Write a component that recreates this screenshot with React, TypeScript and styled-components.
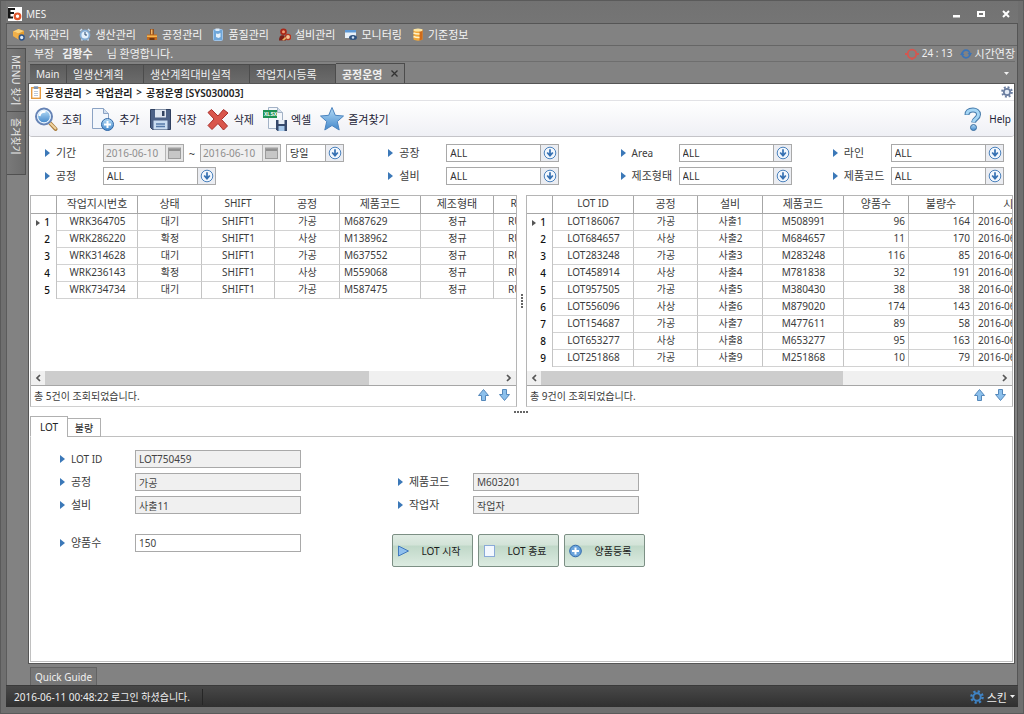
import React from "react";
import styled, { createGlobalStyle, css } from "styled-components";

const GlobalStyle = createGlobalStyle`
  *, *::before, *::after { box-sizing: border-box; }
  body { margin: 0; background: #6e6e6e; }
  body, button, input, select {
    font-family: "Noto Sans", "Noto Sans CJK KR", sans-serif;
    font-size: 11px;
    color: #3c3c3c;
  }
  button { cursor: pointer; }
`;

/* ---------- window frame ---------- */

const Shell = styled.div`
  min-height: 100vh;
  display: flex;
  flex-direction: column;
  padding: 0 5px 6px;
  background: #6f6f6f;
  border: 1px solid #5a5a5a;
`;

const TitleBar = styled.header`
  display: flex;
  align-items: center;
  gap: 4px;
  height: 22px;
  padding: 4px 2px 0;
  background: linear-gradient(#727272, #757575);
  color: #f2f2f2;
  font-size: 10px;
`;

const WindowButtons = styled.div`
  display: flex;
  gap: 9px;
  margin-left: auto;
  padding-right: 2px;
`;

const WindowButton = styled.button`
  display: grid;
  place-items: center;
  width: 16px;
  height: 14px;
  padding: 0;
  border: 0;
  background: none;
`;

const Frame = styled.div`
  flex: 1;
  display: flex;
  flex-direction: column;
  background: #828282;
  border: 1px solid #555;
  border-bottom: 0;
  border-left-color: #5c5c5c;
`;

const MenuBar = styled.nav`
  display: flex;
  align-items: center;
  gap: 10px;
  height: 22px;
  padding: 0 6px;
  border-bottom: 1px solid #666;
`;

const MenuItem = styled.button`
  display: flex;
  align-items: center;
  gap: 4px;
  padding: 0;
  border: 0;
  background: none;
  color: #f4f4f4;
  line-height: 16px;
  white-space: nowrap;
`;

const Workspace = styled.div`
  flex: 1;
  display: flex;
`;

const SideRail = styled.aside`
  flex: none;
  width: 21px;
  padding-top: 2px;
`;

const SideTab = styled.button`
  display: flex;
  align-items: center;
  width: 19px;
  height: 64px;
  padding: 6px 0;
  border: 1px solid #505050;
  border-left: 0;
  margin-bottom: -1px;
  background: linear-gradient(90deg, #7a7a7a, #6c6c6c);
  color: #e8e8e8;
  writing-mode: vertical-rl;
  text-orientation: sideways;
  white-space: nowrap;
  font-size: 10px;
  line-height: 18px;
`;

const Main = styled.main`
  flex: 1;
  min-width: 0;
  display: flex;
  flex-direction: column;
  padding-right: 2px;
`;

const UserBar = styled.div`
  display: flex;
  align-items: center;
  height: 16px;
  padding: 0 0 0 6px;
  border-bottom: 1px solid #6e6e6e;
  color: #f0f0f0;
  line-height: 15px;
  white-space: nowrap;
  strong { margin: 0 14px 0 8px; }
`;

const Session = styled.div`
  display: flex;
  align-items: center;
  gap: 3px;
  margin-left: auto;
  font-size: 10px;
`;

const ExtendButton = styled.button`
  display: flex;
  align-items: center;
  gap: 3px;
  margin-left: 4px;
  padding: 0;
  border: 0;
  background: none;
  color: #f0f0f0;
  line-height: 15px;
`;

const TabStrip = styled.div`
  display: flex;
  align-items: flex-end;
  height: 21px;
  padding: 0 3px 0 2px;
`;

const DocTab = styled.button<{ $width: number; $active?: boolean; $latin?: boolean }>`
  display: flex;
  align-items: center;
  justify-content: space-between;
  width: ${(p) => p.$width}px;
  height: ${(p) => (p.$active ? 20 : 19)}px;
  padding: 0 6px;
  border: 1px solid #4c4c4c;
  border-width: 1px 1px 0 0;
  background: linear-gradient(#5c5c5c, #6b6b6b);
  color: #f0f0f0;
  font-size: ${(p) => (p.$latin ? 10 : 11)}px;
  white-space: nowrap;
  ${(p) =>
    p.$active &&
    css`
      background: #828282;
      font-weight: 700;
    `}
`;

const TabMenu = styled.button`
  display: grid;
  place-items: center;
  width: 12px;
  height: 20px;
  margin-left: auto;
  padding: 0;
  border: 0;
  background: none;
`;

const Page = styled.div`
  flex: 1;
  display: flex;
  flex-direction: column;
  border: 1px solid #555;
  background: #fff;
`;

/* ---------- page header ---------- */

const Breadcrumb = styled.div`
  display: flex;
  align-items: center;
  gap: 4px;
  height: 17px;
  padding: 0 1px 0 2px;
  border-bottom: 1px solid #e2e2e6;
  color: #222;
  font-size: 10px;
  font-weight: 600;
  white-space: nowrap;
  svg:last-child { margin-left: auto; }
`;

const Toolbar = styled.div`
  display: flex;
  align-items: center;
  gap: 9px;
  height: 36px;
  padding: 0 3px 0 5px;
  border-bottom: 1px solid #c4c4c8;
  border-radius: 0 0 3px 3px;
  background: linear-gradient(#fff, #eff0f5);
`;

const Tool = styled.button<{ $end?: boolean }>`
  display: flex;
  align-items: center;
  gap: 4px;
  padding: 0;
  border: 0;
  background: none;
  color: #222236;
  white-space: nowrap;
  ${(p) => p.$end && "margin-left: auto; font-size: 10px;"}
`;

/* ---------- filters ---------- */

const Filters = styled.form`
  display: grid;
  grid-template-columns: 343fr 232fr 212fr 181fr;
  row-gap: 5px;
  padding: 7px 0 10px 16px;
`;

const Field = styled.div`
  display: flex;
  align-items: center;
  min-width: 0;
`;

const Label = styled.label<{ $width: number; $latin?: boolean }>`
  display: flex;
  align-items: center;
  gap: 6px;
  flex: none;
  width: ${(p) => p.$width}px;
  font-size: ${(p) => (p.$latin ? 10 : 11)}px;
  line-height: 16px;
  white-space: nowrap;
`;

const controlBox = css`
  height: 18px;
  border: 1px solid #a9a9a9;
  border-radius: 0;
  background: #fff;
  font-size: 10px;
`;

const SelectBox = styled.span<{ $width: number }>`
  position: relative;
  display: flex;
  width: ${(p) => p.$width}px;
  svg { position: absolute; right: 1px; top: 1px; pointer-events: none; }
`;

const SelectInput = styled.select`
  ${controlBox}
  width: 100%;
  padding: 0 18px 0 3px;
  appearance: none;
  background: linear-gradient(90deg, #a9a9a9 1px, #ebedf2 1px) right / 18px 100% no-repeat #fff;
  color: #333;
`;

const DateBox = styled.span`
  position: relative;
  display: flex;
  width: 81px;
  svg { position: absolute; right: 3px; top: 3px; pointer-events: none; }
`;

const DateInput = styled.input`
  ${controlBox}
  width: 100%;
  padding: 0 18px 0 2px;
  background: linear-gradient(90deg, #b5b5b5 1px, #e6e6e6 1px) right / 18px 100% no-repeat #f0f0f0;
  color: #8e8e8e;
`;

const Tilde = styled.span`
  width: 16px;
  text-align: center;
`;

const Period = styled.div`
  margin-left: 5px;
`;

/* ---------- data grids ---------- */

const Grids = styled.div`
  display: grid;
  grid-template-columns: minmax(0, 1fr) 9px minmax(0, 1fr);
  padding: 0 1px;
`;

const GridPanel = styled.section`
  display: flex;
  flex-direction: column;
  border: 1px solid #b5b5b5;
  border-bottom-color: #d0d0d0;
`;

const TableClip = styled.div`
  flex: 1;
  overflow: hidden;
  padding-bottom: 4px;
`;

const Table = styled.table`
  table-layout: fixed;
  width: 0;
  border-collapse: separate;
  border-spacing: 0;
`;

const HeadCell = styled.th<{ $latin?: boolean }>`
  height: 18px;
  padding: 0 0 2px;
  border-right: 1px solid #a6a6a6;
  border-bottom: 1px solid #a6a6a6;
  font-size: ${(p) => (p.$latin ? 10 : 11)}px;
  font-weight: 400;
  line-height: 15px;
  white-space: nowrap;
`;

const Cell = styled.td<{ $align: string }>`
  height: 17px;
  padding: 0 3px 2px 4px;
  border-right: 1px solid #c4c4c4;
  border-bottom: 1px solid #d2d2d2;
  font-size: 10px;
  line-height: 14px;
  text-align: ${(p) => p.$align};
  white-space: nowrap;
`;

const RowHead = styled.th`
  height: 17px;
  padding: 0 6px 1px 0;
  border-right: 1px solid #c4c4c4;
  font-size: 10px;
  font-weight: 500;
  line-height: 14px;
  text-align: right;
  color: #111;
  svg { margin-right: 4px; }
`;

const ScrollBar = styled.div`
  display: flex;
  height: 15px;
  border-bottom: 1px solid #a6a6a6;
  background: #f0f0f0;
`;

const ScrollButton = styled.button`
  display: grid;
  place-items: center;
  width: 14px;
  padding: 0;
  border: 0;
  background: none;
`;

const Track = styled.div`
  flex: 1;
`;

const Thumb = styled.div<{ $size: number }>`
  width: ${(p) => p.$size}%;
  height: 14px;
  background: #cdcdcd;
`;

const GridFooter = styled.div`
  display: flex;
  align-items: center;
  gap: 10px;
  height: 20px;
  padding: 0 6px 2px 3px;
  font-size: 10px;
  span { margin-right: auto; }
`;

const ArrowButton = styled.button`
  display: grid;
  padding: 0;
  border: 0;
  background: none;
`;

const Splitter = styled.div<{ $vertical?: boolean }>`
  display: flex;
  align-items: center;
  justify-content: center;
  ${(p) => (p.$vertical ? "" : "height: 9px;")}
`;

/* ---------- detail area ---------- */

const DetailTabs = styled.div`
  display: flex;
  align-items: flex-end;
  height: 21px;
  padding-left: 1px;
  margin-bottom: -1px;
`;

const DetailTab = styled.button<{ $active?: boolean }>`
  position: relative;
  height: ${(p) => (p.$active ? 21 : 19)}px;
  width: ${(p) => (p.$active ? 38 : 34)}px;
  margin-right: ${(p) => (p.$active ? -1 : 0)}px;
  padding: 0;
  border: 1px solid #b0b0b0;
  border-bottom-color: ${(p) => (p.$active ? "#fff" : "#b0b0b0")};
  background: #fff;
  color: #222;
  font-size: 10px;
`;

const DetailPanel = styled.section`
  flex: 1;
  display: flex;
  flex-direction: column;
  gap: 20px;
  margin: 0 1px 1px;
  padding: 13px 29px 30px;
  border: 1px solid #c0c0c0;
`;

const DetailGrid = styled.div`
  display: grid;
  grid-template-columns: 338px minmax(0, 1fr);
  row-gap: 5px;
`;

const DetailRow = styled.div`
  display: flex;
  align-items: flex-start;
  gap: 91px;
`;

const TextInput = styled.input`
  ${controlBox}
  width: 166px;
  padding: 0 3px;
  color: #444;
  &:read-only { background: #f0f0f0; }
`;

const Actions = styled.div`
  display: flex;
  gap: 5px;
`;

const ActionButton = styled.button`
  display: flex;
  align-items: center;
  width: 81px;
  height: 33px;
  padding: 0 4px;
  border: 1px solid #7c8f84;
  border-radius: 2px;
  background: linear-gradient(#dfebe3 0%, #d3e3d8 32%, #c0d8c8 36%, #dcebe1 100%);
  color: #1c1c1c;
  font-size: 10px;
  white-space: nowrap;
  span { flex: 1; padding-left: 4px; text-align: center; }
`;

/* ---------- bottom ---------- */

const GuideRow = styled.div`
  display: flex;
  height: 21px;
  padding: 3px 0 0 23px;
`;

const GuideTab = styled.button`
  padding: 0 4px;
  border: 1px solid #636363;
  border-bottom: 0;
  background: #787878;
  color: #f0f0f0;
  font-size: 10px;
`;

const StatusBar = styled.footer`
  display: flex;
  align-items: center;
  height: 22px;
  padding: 0 3px 0 8px;
  border-top: 1px solid #3a3a3a;
  background: linear-gradient(#484848, #303030);
  color: #eee;
  font-size: 10px;
`;

const StatusText = styled.span`
  padding-right: 12px;
  border-right: 1px solid #262626;
  line-height: 16px;
`;

const SkinButton = styled.button`
  display: flex;
  align-items: center;
  gap: 3px;
  margin-left: auto;
  padding: 0;
  border: 0;
  background: none;
  color: #eee;
`;

/* ---------- icons ---------- */

const Bullet = () => (
  <svg width="5" height="8" viewBox="0 0 5 8"><path d="M0 0l5 4-5 4z" fill="#3b78b8" /></svg>
);

const Logo = () => (
  <svg width="14" height="14" viewBox="0 0 14 14">
    <rect width="14" height="14" fill="#fff" />
    <path d="M0 1h7v2H2.500v2H6v2H2.500v2.500H5v2H0z" fill="#161616" />
    <circle cx="9.500" cy="9.300" r="2.800" fill="none" stroke="#e0562c" strokeWidth="2.200" />
  </svg>
);

const ChevronDown = ({ color = "#f0f0f0" }: { color?: string }) => (
  <svg width="5" height="3" viewBox="0 0 5 3"><path d="M0 0h5L2.500 3z" fill={color} /></svg>
);

const MenuIcon = ({ kind }: { kind: string }) => (
  <svg width="12" height="13" viewBox="0 0 12 13">
    {kind === "material" && (
      <>
        <path d="M0 3.500L5.500 1 11 3v5l-5 3.500L0 8z" fill="#e39a2d" />
        <path d="M0 3.500l5.500 2L11 3 5.500 1z" fill="#f9d27c" />
        <path d="M5.500 5.500v6L0 8V3.500z" fill="#f0b04a" />
        <circle cx="8.700" cy="9.500" r="2.400" fill="#dbe8f7" stroke="#2f5488" strokeWidth="1.500" />
      </>
    )}
    {kind === "plan" && (
      <>
        <path d="M1 3l2-2M11 3L9 1M2.500 12.500l1-1.500M9.500 12.500l-1-1.500" stroke="#c8dcf0" strokeWidth="1.500" />
        <circle cx="6" cy="7" r="4.500" fill="#e4f0fb" stroke="#83abd3" strokeWidth="1.800" />
        <path d="M6 4v3h2" fill="none" stroke="#28496f" />
      </>
    )}
    {kind === "process" && (
      <>
        <path d="M4 1h4v6H4z" fill="#8d4f22" />
        <path d="M5 1.500h1.500v5H5z" fill="#f4b565" />
        <path d="M1 6.500h10V12H1z" fill="#c46a1c" />
        <path d="M1 7.500h10v1.500H1z" fill="#f6b850" /><path d="M3.500 10h5v2h-5z" fill="#6b3410" />
      </>
    )}
    {kind === "quality" && (
      <>
        <rect x="1.500" y="1.500" width="9" height="11" rx="1" fill="#6ea6da" stroke="#9cc2e8" />
        <rect x="3.500" y="0.500" width="4" height="2.500" fill="#dcecfb" />
        <path d="M4 5.500l2 .5 2.500-1v4L6.500 10 4 9z" fill="#e6f1fb" />
      </>
    )}
    {kind === "equipment" && (
      <>
        <circle cx="4.500" cy="3.800" r="3.300" fill="#a92818" />
        <path d="M0 12.500C0 8 2 6.500 5 7.500l2 5z" fill="#7c1e14" />
        <circle cx="4.500" cy="3.800" r="1.500" fill="#f09a72" />
        <circle cx="9" cy="9" r="2.600" fill="#f3c79a" stroke="#b5351f" strokeWidth="1.400" />
        <path d="M3 12l3-3 1.500 1L5 12.500z" fill="#e9b765" />
      </>
    )}
    {kind === "monitor" && (
      <>
        <rect x="0" y="2" width="11" height="8" fill="#e8f1fa" /><path d="M0 2h11v2.500H0z" fill="#5c98d6" />
        <ellipse cx="8" cy="9.500" rx="4" ry="2.500" fill="#2f527f" /><circle cx="8" cy="9.500" r="1.200" fill="#cfe2f6" />
      </>
    )}
    {kind === "base" && (
      <>
        <path d="M1.500 1.500h9v10c-2 1.500-7 1.500-9 0z" fill="#f3a93a" />
        <path d="M7.500 2h3v9.500l-3 1z" fill="#cf6a1a" />
        <ellipse cx="6" cy="2" rx="4.500" ry="1.500" fill="#fde7a5" />
        <path d="M1.500 5c2 1 4 1 6 1M1.500 8.500c2 1 4 1 6 1" fill="none" stroke="#fff3c8" strokeWidth="1.400" />
      </>
    )}
  </svg>
);

const DropIcon = () => (
  <svg width="16" height="16" viewBox="0 0 16 16">
    <circle cx="8" cy="8" r="5.800" fill="#f2f7fd" stroke="#4b82bd" />
    <path d="M8 4.300v6.500M5.200 7.500L8 10.800l2.800-3.300" fill="none" stroke="#3570b2" strokeWidth="1.700" />
  </svg>
);

const CalendarIcon = () => (
  <svg width="13" height="13" viewBox="0 0 13 13">
    <rect x=".5" y="1" width="12" height="10.500" fill="#c6c6c6" stroke="#9c9c9c" /><path d="M1 1.500h11V4H1z" fill="#8f8f8f" />
  </svg>
);

const ToolIcon = ({ kind }: { kind: string }) => (
  <svg width="24" height="26" viewBox="0 0 24 26">
    <defs>
      <linearGradient id={`blue-${kind}`} x1="0" y1="0" x2="0" y2="1">
        <stop offset="0" stopColor="#b5dcf7" /><stop offset="1" stopColor="#4388cb" />
      </linearGradient>
    </defs>
    {kind === "search" && (
      <>
        <path d="M15.500 16.500l6 6.500" stroke="#a87c3c" strokeWidth="4" strokeLinecap="round" />
        <path d="M16 17l5.500 5.500" stroke="#f0d3a0" strokeWidth="2" strokeLinecap="round" />
        <circle cx="10" cy="10.500" r="8" fill="#cde6fa" stroke="#6683b5" strokeWidth="2" />
        <circle cx="10" cy="10.500" r="6.300" fill="url(#blue-search)" stroke="#eaf4fd" />
        <path d="M5.500 10c.5-3 3-4.500 6-4.200" stroke="#fff" strokeWidth="2" fill="none" />
      </>
    )}
    {kind === "add" && (
      <>
        <path d="M1.500 2.500h11l5 5v15h-16z" fill="#f3f7fc" stroke="#8ba3c4" /><path d="M12.500 2.500v5h5" fill="#cfdeef" stroke="#8ba3c4" />
        <circle cx="16.500" cy="18.500" r="6" fill="url(#blue-add)" stroke="#2f65a5" />
        <path d="M16.500 15v7M13 18.500h7" stroke="#fff" strokeWidth="2" />
      </>
    )}
    {kind === "save" && (
      <>
        <path d="M1.500 3.500h20v20h-18l-2-2z" fill="#4c6186" stroke="#2f4060" />
        <path d="M6 3.500h11v8H6z" fill="#dfe6f0" /><path d="M13 5h2.500v5H13z" fill="#33435f" />
        <path d="M4.500 14.500h14v9h-14z" fill="#c9ddf2" /><path d="M7 18h9M7 20.500h9" stroke="#5579a8" strokeWidth="1.500" />
      </>
    )}
    {kind === "delete" && (
      <path d="M2 6.500l3.500-3L12 10l5.500-6.500L22 7l-6.500 6.500 6 6.500-4 4L12 17.500 6 23.500l-4-4L8 13z" fill="#d9564c" stroke="#a92e2a" strokeLinejoin="round" />
    )}
    {kind === "excel" && (
      <>
        <path d="M5.500 1.500h9l5 5v16h-14z" fill="#f4f7fb" stroke="#a3b2c6" /><path d="M14.500 1.500v5h5" fill="#d7e1ed" stroke="#a3b2c6" />
        <path d="M0 4h14v8H0z" fill="#1f9254" />
        <text x="1" y="10" fontSize="5" fontWeight="700" fill="#fff" fontFamily="Liberation Sans, sans-serif">XLSX</text>
        <path d="M13 14h11v11H14.500L13 23.500z" fill="#36496b" /><path d="M15.500 14h6v4h-6z" fill="#e7edf5" />
        <path d="M15.500 20h6v5h-6z" fill="#a7c8ea" />
      </>
    )}
    {kind === "star" && (
      <path d="M12 1.500l3.300 7.800 8.200.7-6.200 5.500 1.900 8.500-7.200-4.500L4.800 24l1.900-8.500L.5 10l8.200-.7z" fill="url(#blue-star)" stroke="#4b84bf" strokeLinejoin="round" />
    )}
    {kind === "help" && (
      <>
        <path d="M6 9C6 5 9 4 12 4s5.500 1.500 5.500 4.500c0 4-4.500 4-5 8" fill="none" stroke="#477bab" strokeWidth="5" />
        <path d="M6 8.500C6 5 9 4 12 4s5.500 1.500 5.500 4.500c0 4-4.500 4-5 7.500" fill="none" stroke="#a5d6f5" strokeWidth="3" />
        <circle cx="12.500" cy="21.500" r="3" fill="url(#blue-help)" stroke="#3d6f9e" />
      </>
    )}
  </svg>
);

const GearIcon = ({ size, color, hole }: { size: number; color: string; hole: string }) => (
  <svg width={size} height={size} viewBox="0 0 14 14">
    <circle cx="7" cy="7" r="5.600" fill="none" stroke={color} strokeWidth="2.400" strokeDasharray="2.200 2.200" />
    <circle cx="7" cy="7" r="3.700" fill={hole} stroke={color} strokeWidth="2" />
  </svg>
);

const ClipboardIcon = () => (
  <svg width="10" height="13" viewBox="0 0 10 13">
    <rect x=".7" y="1.700" width="8.600" height="10.600" fill="#fff" stroke="#e59a3f" strokeWidth="1.400" />
    <rect x="2.800" y=".3" width="4.400" height="2.700" fill="#7f95b2" /><path d="M3 5.500h4M3 7.500h4M3 9.500h4" stroke="#bcc9d9" />
  </svg>
);

const TimerIcon = () => (
  <svg width="14" height="12" viewBox="0 0 14 12">
    <circle cx="7" cy="6" r="4.300" fill="none" stroke="#d5564f" strokeWidth="1.800" />
    <path d="M0 6h3M11 6h3M6 11h2" stroke="#d5564f" strokeWidth="2" />
  </svg>
);

const RefreshIcon = () => (
  <svg width="12" height="12" viewBox="0 0 12 12">
    <circle cx="6" cy="6" r="3.800" fill="none" stroke="#3b74b8" strokeWidth="1.700" />
    <path d="M7.500 5H12l-2 3zM4.500 7H0l2-3z" fill="#3b74b8" />
  </svg>
);

const MoveIcon = ({ down }: { down?: boolean }) => (
  <svg width="11" height="12" viewBox="0 0 11 12">
    <path
      d={down ? "M3.500.5h4v5h3L5.500 11.500.5 5.500h3z" : "M5.500.5l5 6h-3v5h-4v-5h-3z"}
      fill="#8cc0ec" stroke="#5588ba" strokeLinejoin="round"
    />
  </svg>
);

const Caret = ({ flip }: { flip?: boolean }) => (
  <svg width="6" height="8" viewBox="0 0 6 8">
    <path d={flip ? "M1 1l3 3-3 3" : "M5 1L2 4l3 3"} fill="none" stroke="#555" strokeWidth="1.700" />
  </svg>
);

const Dots = ({ vertical }: { vertical?: boolean }) => (
  <svg width={vertical ? 2 : 15} height={vertical ? 15 : 2}>
    {[0, 3, 6, 9, 12].map((n) => (
      <rect key={n} x={vertical ? 0 : n} y={vertical ? n : 0} width="2" height="2" fill="#666" />
    ))}
  </svg>
);

const ActionIcon = ({ kind }: { kind: string }) => (
  <svg width="13" height="14" viewBox="0 0 13 14">
    {kind === "start" && <path d="M1.500 2l10 5-10 5z" fill="#8fc0ee" stroke="#4179bd" strokeLinejoin="round" />}
    {kind === "end" && <rect x="1.500" y="1.500" width="10" height="11" fill="#f3f8ff" stroke="#8aaad8" />}
    {kind === "add" && (
      <>
        <circle cx="6.500" cy="7" r="5.800" fill="#6ba4dc" stroke="#2f68ab" />
        <path d="M6.500 3.500v7M3 7h7" stroke="#fff" strokeWidth="2" />
      </>
    )}
  </svg>
);

/* ---------- data ---------- */

const menus = [
  ["material", "자재관리"], ["plan", "생산관리"], ["process", "공정관리"], ["quality", "품질관리"],
  ["equipment", "설비관리"], ["monitor", "모니터링"], ["base", "기준정보"],
];

const tools = [
  ["search", "조회"], ["add", "추가"], ["save", "저장"], ["delete", "삭제"], ["excel", "엑셀"], ["star", "즐겨찾기"],
];

type Column = { title: string; width: number; align: string };
const col = (title: string, width: number, align = "center"): Column => ({ title, width, align });
const isLatin = (text: string) => /^[A-Za-z ]+$/.test(text);

const orderColumns = [
  col("작업지시번호", 81), col("상태", 64), col("SHIFT", 73), col("공정", 65),
  col("제품코드", 81, "left"), col("제조형태", 73), col("RUN", 55),
];
const orders = [
  ["WRK364705", "대기", "SHIFT1", "가공", "M687629", "정규", "RUN1"],
  ["WRK286220", "확정", "SHIFT1", "사상", "M138962", "정규", "RUN1"],
  ["WRK314628", "대기", "SHIFT1", "가공", "M637552", "정규", "RUN1"],
  ["WRK236143", "확정", "SHIFT1", "사상", "M559068", "정규", "RUN1"],
  ["WRK734734", "대기", "SHIFT1", "가공", "M587475", "정규", "RUN1"],
];

const lotColumns = [
  col("LOT ID", 81), col("공정", 64), col("설비", 65), col("제품코드", 81),
  col("양품수", 65, "right"), col("불량수", 65, "right"), col("시작시간", 100, "left"),
];
const lots = [
  ["LOT186067", "가공", "사출1", "M508991", "96", "164", "2016-06-10"],
  ["LOT684657", "사상", "사출2", "M684657", "11", "170", "2016-06-10"],
  ["LOT283248", "가공", "사출3", "M283248", "116", "85", "2016-06-10"],
  ["LOT458914", "사상", "사출4", "M781838", "32", "191", "2016-06-10"],
  ["LOT957505", "가공", "사출5", "M380430", "38", "38", "2016-06-10"],
  ["LOT556096", "사상", "사출6", "M879020", "174", "143", "2016-06-10"],
  ["LOT154687", "가공", "사출7", "M477611", "89", "58", "2016-06-10"],
  ["LOT653277", "사상", "사출8", "M653277", "95", "163", "2016-06-10"],
  ["LOT251868", "가공", "사출9", "M251868", "10", "79", "2016-06-10"],
];

/* ---------- composed parts ---------- */

const Select = ({ id, value, label, width = 113 }: { id: string; value: string; label?: string; width?: number }) => (
  <SelectBox $width={width}>
    <SelectInput id={id} aria-label={label} defaultValue={value}><option>{value}</option></SelectInput>
    <DropIcon />
  </SelectBox>
);

const FilterSelect = ({ id, label }: { id: string; label: string }) => (
  <Field>
    <Label htmlFor={id} $width={58} $latin={isLatin(label)}><Bullet />{label}</Label>
    <Select id={id} value="ALL" />
  </Field>
);

const DatePick = ({ id, label }: { id: string; label?: string }) => (
  <DateBox>
    <DateInput id={id} aria-label={label} disabled defaultValue="2016-06-10" />
    <CalendarIcon />
  </DateBox>
);

const DetailField = ({ id, label, value, editable }: { id: string; label: string; value: string; editable?: boolean }) => (
  <Field>
    <Label htmlFor={id} $width={75} $latin={isLatin(label)}><Bullet />{label}</Label>
    <TextInput id={id} defaultValue={value} readOnly={!editable} />
  </Field>
);

const DataGrid = ({ columns, rows, thumb }: { columns: Column[]; rows: string[][]; thumb: number }) => (
  <GridPanel>
    <TableClip>
      <Table>
        <colgroup>
          <col style={{ width: 26 }} />
          {columns.map((c) => <col key={c.title} style={{ width: c.width }} />)}
        </colgroup>
        <thead>
          <tr>
            <HeadCell aria-label="No" />
            {columns.map((c) => <HeadCell key={c.title} $latin={isLatin(c.title)}>{c.title}</HeadCell>)}
          </tr>
        </thead>
        <tbody>
          {rows.map((row, i) => (
            <tr key={row[0]}>
              <RowHead scope="row">
                {i === 0 && <svg width="4" height="6" viewBox="0 0 4 6"><path d="M0 0l4 3-4 3z" fill="#555" /></svg>}
                {i + 1}
              </RowHead>
              {row.map((value, c) => <Cell key={c} $align={columns[c].align}>{value}</Cell>)}
            </tr>
          ))}
        </tbody>
      </Table>
    </TableClip>
    <ScrollBar>
      <ScrollButton aria-label="왼쪽으로"><Caret /></ScrollButton>
      <Track><Thumb $size={thumb} /></Track>
      <ScrollButton aria-label="오른쪽으로"><Caret flip /></ScrollButton>
    </ScrollBar>
    <GridFooter>
      <span>총 {rows.length}건이 조회되었습니다.</span>
      <ArrowButton aria-label="위로"><MoveIcon /></ArrowButton>
      <ArrowButton aria-label="아래로"><MoveIcon down /></ArrowButton>
    </GridFooter>
  </GridPanel>
);

export default function App() {
  return (
    <>
      <GlobalStyle />
      <Shell>
        <TitleBar>
          <Logo />MES
          <WindowButtons>
            <WindowButton aria-label="최소화">
              <svg width="8" height="8"><path d="M1 5h7v2.500H1z" fill="#fff" /></svg>
            </WindowButton>
            <WindowButton aria-label="최대화">
              <svg width="8" height="8"><path d="M1 2h6v4H1z" fill="none" stroke="#fff" strokeWidth="2" /></svg>
            </WindowButton>
            <WindowButton aria-label="닫기">
              <svg width="8" height="8"><path d="M1 1l6 6M7 1L1 7" stroke="#fff" strokeWidth="2" /></svg>
            </WindowButton>
          </WindowButtons>
        </TitleBar>
        <Frame>
          <MenuBar>
            {menus.map(([kind, label]) => <MenuItem key={kind}><MenuIcon kind={kind} />{label}</MenuItem>)}
          </MenuBar>
          <Workspace>
            <SideRail>
              <SideTab>MENU 찾기</SideTab>
              <SideTab>즐겨찾기</SideTab>
            </SideRail>
            <Main>
              <UserBar>
                <span>부장</span><strong>김황수</strong><span>님 환영합니다.</span>
                <Session>
                  <TimerIcon />24 : 13
                  <ExtendButton><RefreshIcon />시간연장</ExtendButton>
                </Session>
              </UserBar>
              <TabStrip>
                <DocTab $width={37} $latin>Main</DocTab>
                <DocTab $width={77}>일생산계획</DocTab>
                <DocTab $width={106}>생산계획대비실적</DocTab>
                <DocTab $width={86}>작업지시등록</DocTab>
                <DocTab $width={69} $active>
                  공정운영
                  <svg width="7" height="7"><path d="M.5.5l6 6M6.500.5l-6 6" stroke="#333" strokeWidth="1.300" /></svg>
                </DocTab>
                <TabMenu aria-label="탭 목록"><ChevronDown /></TabMenu>
              </TabStrip>
              <Page>
                <Breadcrumb>
                  <ClipboardIcon />
                  <span>공정관리</span><span>&gt;</span>
                  <span>작업관리</span><span>&gt;</span>
                  <span>공정운영 [SYS030003]</span>
                  <GearIcon size={12} color="#6b7ea0" hole="#e4ebf5" />
                </Breadcrumb>
                <Toolbar>
                  {tools.map(([kind, label]) => <Tool key={kind}><ToolIcon kind={kind} />{label}</Tool>)}
                  <Tool $end><ToolIcon kind="help" />Help</Tool>
                </Toolbar>
                <Filters>
                  <Field>
                    <Label htmlFor="from" $width={58}><Bullet />기간</Label>
                    <DatePick id="from" /><Tilde>~</Tilde><DatePick id="to" label="종료일" />
                    <Period><Select id="period" value="당일" label="기간 단위" width={58} /></Period>
                  </Field>
                  <FilterSelect id="plant" label="공장" />
                  <FilterSelect id="area" label="Area" />
                  <FilterSelect id="line" label="라인" />
                  <FilterSelect id="process" label="공정" />
                  <FilterSelect id="equipment" label="설비" />
                  <FilterSelect id="type" label="제조형태" />
                  <FilterSelect id="product" label="제품코드" />
                </Filters>
                <Grids>
                  <DataGrid columns={orderColumns} rows={orders} thumb={71} />
                  <Splitter $vertical><Dots vertical /></Splitter>
                  <DataGrid columns={lotColumns} rows={lots} thumb={66} />
                </Grids>
                <Splitter><Dots /></Splitter>
                <DetailTabs>
                  <DetailTab $active>LOT</DetailTab>
                  <DetailTab>불량</DetailTab>
                </DetailTabs>
                <DetailPanel>
                  <DetailGrid>
                    <DetailField id="lot" label="LOT ID" value="LOT750459" /><span />
                    <DetailField id="lot-process" label="공정" value="가공" />
                    <DetailField id="lot-product" label="제품코드" value="M603201" />
                    <DetailField id="lot-equipment" label="설비" value="사출11" />
                    <DetailField id="lot-worker" label="작업자" value="작업자" />
                  </DetailGrid>
                  <DetailRow>
                    <DetailField id="good" label="양품수" value="150" editable />
                    <Actions>
                      <ActionButton><ActionIcon kind="start" /><span>LOT 시작</span></ActionButton>
                      <ActionButton><ActionIcon kind="end" /><span>LOT 종료</span></ActionButton>
                      <ActionButton><ActionIcon kind="add" /><span>양품등록</span></ActionButton>
                    </Actions>
                  </DetailRow>
                </DetailPanel>
              </Page>
            </Main>
          </Workspace>
          <GuideRow><GuideTab>Quick Guide</GuideTab></GuideRow>
        </Frame>
        <StatusBar>
          <StatusText>2016-06-11 00:48:22 로그인 하셨습니다.</StatusText>
          <SkinButton><GearIcon size={14} color="#3f83c4" hole="#3a3a3a" />스킨<ChevronDown /></SkinButton>
        </StatusBar>
      </Shell>
    </>
  );
}
